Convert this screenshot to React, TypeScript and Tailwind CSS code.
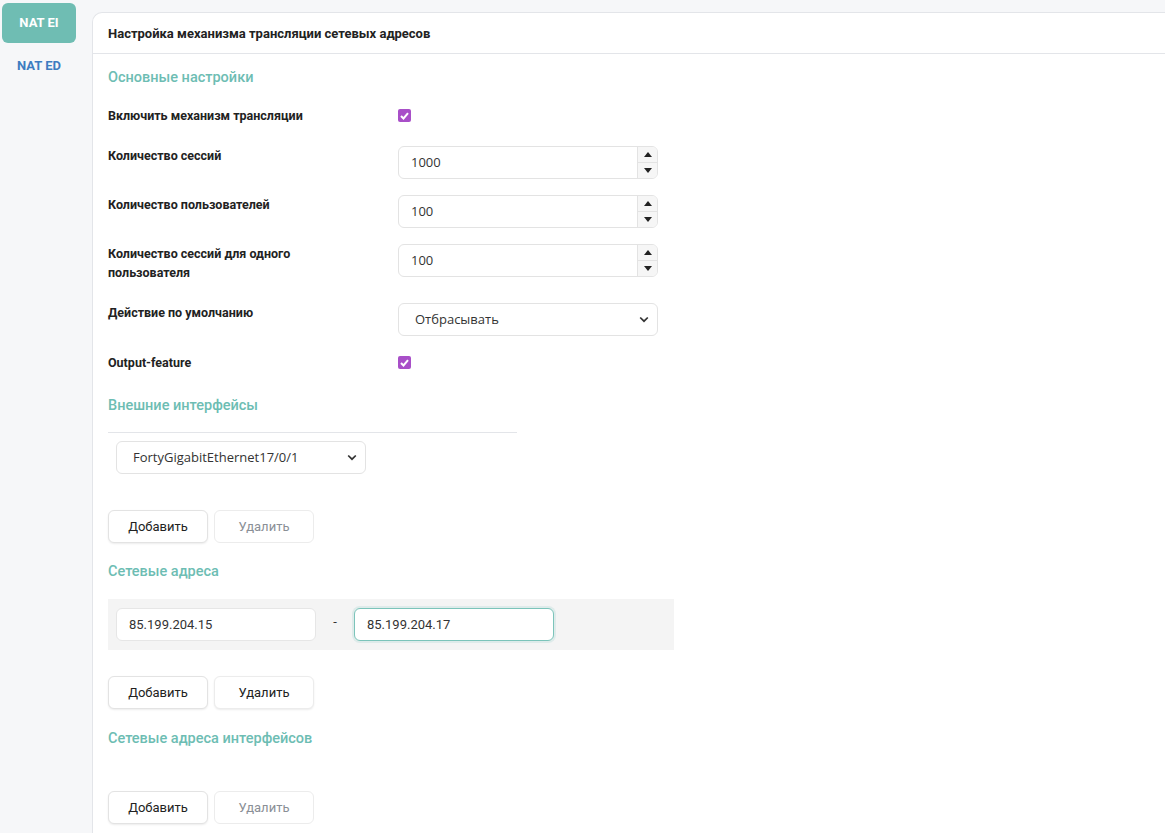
import React from "react";

const font = { fontFamily: "Roboto, 'Noto Sans', sans-serif" };

function Spinner() {
  return (
    <div className="flex flex-col w-[20px] border-l border-[#e3e3e3] bg-[#f6f6f6] rounded-r-[5px] overflow-hidden">
      <div className="flex-1 flex items-center justify-center border-b border-[#e3e3e3]">
        <svg width="8" height="5" viewBox="0 0 8 5"><path d="M0 5 L4 0 L8 5Z" fill="#222" /></svg>
      </div>
      <div className="flex-1 flex items-center justify-center">
        <svg width="8" height="5" viewBox="0 0 8 5"><path d="M0 0 L4 5 L8 0Z" fill="#222" /></svg>
      </div>
    </div>
  );
}

function NumberField({ value }: { value: string }) {
  return (
    <div className="flex w-[260px] h-[33px] border border-[#e3e3e3] rounded-[6px] bg-white">
      <div className="flex-1 flex items-center pl-[12px] text-[13px] text-[#333]" style={{ fontFamily: "'Open Sans', sans-serif" }}>
        {value}
      </div>
      <Spinner />
    </div>
  );
}

function Chevron() {
  return (
    <svg width="10" height="7" viewBox="0 0 10 7">
      <path d="M1.2 1.5 L5 5.2 L8.8 1.5" stroke="#333" strokeWidth="1.7" fill="none" />
    </svg>
  );
}

function SelectBox({ value, width }: { value: string; width: string }) {
  return (
    <div className={`flex items-center justify-between h-[33px] border border-[#e3e3e3] rounded-[6px] bg-white pl-[16px] pr-[8px] ${width}`}>
      <span className="text-[13px] text-[#333]" style={{ fontFamily: "'Open Sans', sans-serif" }}>{value}</span>
      <Chevron />
    </div>
  );
}

function Check() {
  return (
    <div className="w-[13px] h-[13px] rounded-[2px] bg-[#a84fc8] flex items-center justify-center">
      <svg width="9" height="8" viewBox="0 0 9 8"><path d="M1 4 L3.5 6.5 L8 1.2" stroke="#fff" strokeWidth="2" fill="none" /></svg>
    </div>
  );
}

function Buttons({ deleteDisabled }: { deleteDisabled: boolean }) {
  return (
    <div className="flex gap-[6px]">
      <button className="w-[100px] h-[33px] rounded-[6px] border border-[#e3e3e3] bg-white text-[13px] text-[#222] shadow-[0_1px_2px_rgba(0,0,0,0.08)]">
        Добавить
      </button>
      <button className={`w-[100px] h-[33px] rounded-[6px] border border-[#ececec] bg-white text-[13px] ${deleteDisabled ? "text-[#8a8f96]" : "text-[#222] shadow-[0_1px_2px_rgba(0,0,0,0.08)]"}`}>
        Удалить
      </button>
    </div>
  );
}

function SectionTitle({ children }: { children: React.ReactNode }) {
  return <div className="text-[14.5px] font-medium text-[#6dbdb3] leading-[20px]">{children}</div>;
}

function Row({ label, children, h }: { label: React.ReactNode; children: React.ReactNode; h: string }) {
  return (
    <div className={`flex ${h}`}>
      <div className="w-[290px] text-[12.5px] font-bold text-[#222] leading-[19px]">{label}</div>
      <div>{children}</div>
    </div>
  );
}

export default function App() {
  return (
    <div className="min-h-[833px] bg-[#f6f7f9] flex" style={font}>
      <div className="w-[92px] shrink-0 pt-[3px] pl-[2px]">
        <div className="w-[74px] h-[40px] rounded-[6px] bg-[#6fbdb3] flex items-center justify-center text-white text-[13px] font-bold">
          NAT EI
        </div>
        <div className="w-[74px] h-[45px] flex items-center justify-center text-[#3d7cc0] text-[13px] font-bold">
          NAT ED
        </div>
      </div>
      <div className="flex-1 mt-[12px] bg-white border-l border-t border-[#e3e5e9] rounded-tl-[10px]">
        <div className="h-[41px] border-b border-[#e3e5e9] flex items-center pl-[15px] pt-[2px] text-[13px] font-bold text-[#222]">
          Настройка механизма трансляции сетевых адресов
        </div>
        <div className="pl-[15px] pt-[14px]">
          <SectionTitle>Основные настройки</SectionTitle>
          <div className="mt-[18px]">
            <Row label="Включить механизм трансляции" h="h-[40px]">
              <div className="pt-[3px]"><Check /></div>
            </Row>
            <Row label="Количество сессий" h="h-[49px]">
              <NumberField value="1000" />
            </Row>
            <Row label="Количество пользователей" h="h-[49px]">
              <NumberField value="100" />
            </Row>
            <Row label={<>Количество сессий для одного<br />пользователя</>} h="h-[59px]">
              <NumberField value="100" />
            </Row>
            <Row label="Действие по умолчанию" h="h-[50px]">
              <SelectBox value="Отбрасывать" width="w-[260px]" />
            </Row>
            <Row label="Output-feature" h="h-[43px]">
              <div className="pt-[3px]"><Check /></div>
            </Row>
          </div>
          <SectionTitle>Внешние интерфейсы</SectionTitle>
          <div className="w-[409px] border-b border-[#e3e5e9] mt-[16px]" />
          <div className="pl-[8px] mt-[8px]">
            <SelectBox value="FortyGigabitEthernet17/0/1" width="w-[250px]" />
          </div>
          <div className="mt-[36px]"><Buttons deleteDisabled /></div>
          <div className="mt-[19px]"><SectionTitle>Сетевые адреса</SectionTitle></div>
          <div className="mt-[17px] w-[566px] h-[51px] bg-[#f4f4f4] flex items-center pl-[8px]">
            <div className="w-[200px] h-[33px] bg-white border border-[#e6e6e6] rounded-[6px] flex items-center pl-[12px] text-[13px] text-[#333]">
              85.199.204.15
            </div>
            <div className="w-[38px] text-center text-[13px] text-[#333] -mt-[6px]">-</div>
            <div className="w-[200px] h-[33px] bg-white border border-[#7cc4ba] rounded-[6px] shadow-[0_0_0_2px_rgba(124,196,186,0.18)] flex items-center pl-[12px] text-[13px] text-[#333]">
              85.199.204.17
            </div>
          </div>
          <div className="mt-[26px]"><Buttons deleteDisabled={false} /></div>
          <div className="mt-[20px]"><SectionTitle>Сетевые адреса интерфейсов</SectionTitle></div>
          <div className="mt-[42px]"><Buttons deleteDisabled /></div>
        </div>
      </div>
    </div>
  );
}
